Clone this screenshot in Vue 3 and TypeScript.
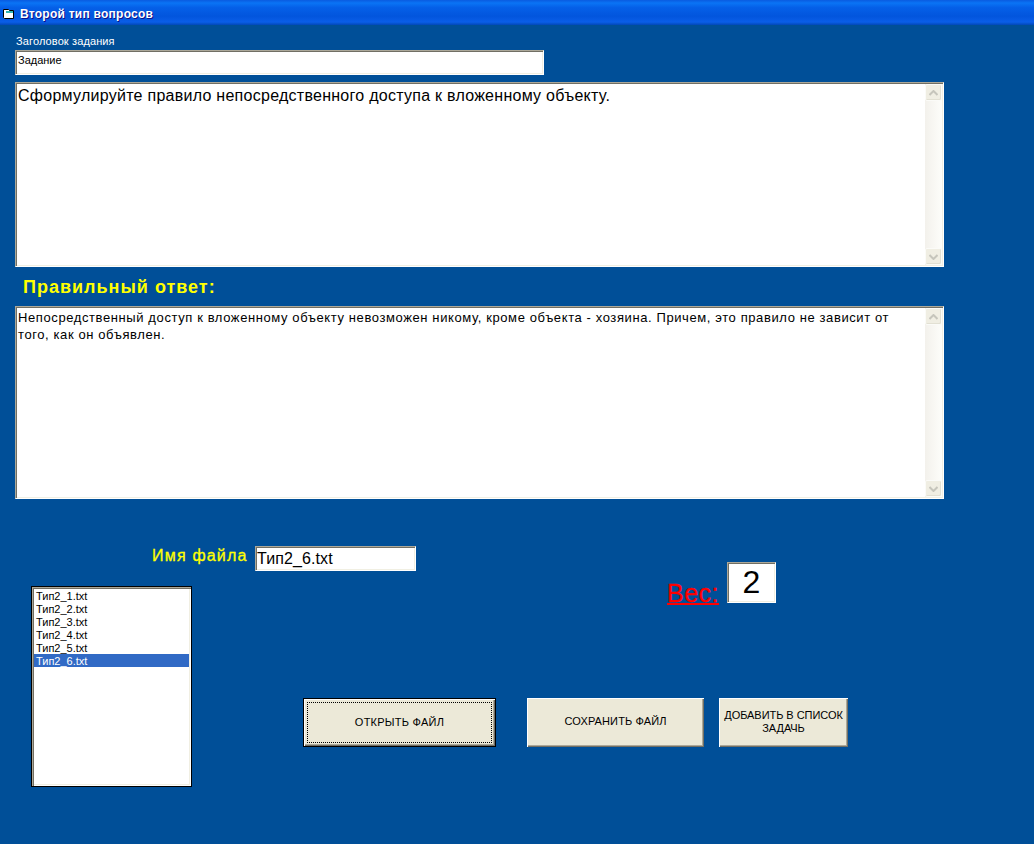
<script setup lang="ts">
const files: string[] = ['Тип2_1.txt', 'Тип2_2.txt', 'Тип2_3.txt', 'Тип2_4.txt', 'Тип2_5.txt', 'Тип2_6.txt']
const selected = 'Тип2_6.txt'
</script>

<template>
  <div class="form">
    <header class="titlebar">
      <svg class="app-icon" width="12" height="10" viewBox="0 0 12 10">
        <path d="M0.5 0.5h5l1 1h4v8h-9l-1-1z" fill="#fff" stroke="#000" stroke-width="1" />
        <rect x="3" y="2" width="7" height="2" fill="#2fb5b5" />
      </svg>
      <span class="title">Второй тип вопросов</span>
    </header>

    <main class="content">
      <label class="caption">Заголовок задания</label>
      <div class="field title-field">Задание</div>

      <div class="memo question">
        <div class="memo-text">Сформулируйте правило непосредственного доступа к вложенному объекту.</div>
        <div class="scrollbar">
          <div class="sb-btn">
            <svg width="9" height="6" viewBox="0 0 9 6"><path d="M0.5 5L4.5 1L8.5 5" fill="none" stroke="#c6c5bc" stroke-width="2" /></svg>
          </div>
          <div class="sb-btn">
            <svg width="9" height="6" viewBox="0 0 9 6"><path d="M0.5 1L4.5 5L8.5 1" fill="none" stroke="#c6c5bc" stroke-width="2" /></svg>
          </div>
        </div>
      </div>

      <h2 class="answer-heading">Правильный ответ:</h2>

      <div class="memo answer">
        <div class="memo-text small">Непосредственный доступ к вложенному объекту невозможен никому, кроме объекта - хозяина. Причем, это правило не зависит от того, как он объявлен.</div>
        <div class="scrollbar">
          <div class="sb-btn">
            <svg width="9" height="6" viewBox="0 0 9 6"><path d="M0.5 5L4.5 1L8.5 5" fill="none" stroke="#c6c5bc" stroke-width="2" /></svg>
          </div>
          <div class="sb-btn">
            <svg width="9" height="6" viewBox="0 0 9 6"><path d="M0.5 1L4.5 5L8.5 1" fill="none" stroke="#c6c5bc" stroke-width="2" /></svg>
          </div>
        </div>
      </div>

      <section class="lower">
        <div class="file-row">
          <span class="file-label">Имя файла</span>
          <div class="field file-field">Тип2_6.txt</div>
        </div>

        <div class="weight">
          <span class="weight-label">Вес:</span>
          <div class="field weight-field">2</div>
        </div>

        <ul class="listbox">
          <li v-for="f in files" :key="f" :class="{ sel: f === selected }">{{ f }}</li>
        </ul>

        <button class="btn default open" type="button"><span class="focus">ОТКРЫТЬ ФАЙЛ</span></button>
        <button class="btn save" type="button">СОХРАНИТЬ ФАЙЛ</button>
        <button class="btn add" type="button">ДОБАВИТЬ В СПИСОК ЗАДАЧЬ</button>
      </section>
    </main>
  </div>
</template>

<style>
html, body {
  margin: 0;
  background: #004f98;
}
</style>

<style scoped>
.form {
  width: 1034px;
  height: 844px;
  overflow: hidden;
  background: #004f98;
  font-family: "Liberation Sans", Arial, sans-serif;
  color: #000;
}
.titlebar {
  height: 25px;
  box-sizing: border-box;
  display: flex;
  align-items: center;
  padding: 3px 0 0 3px;
  gap: 5px;
  background: linear-gradient(180deg, #0a5be0 0%, #0a74f5 12%, #0560e8 30%, #0255dd 65%, #0a5ee8 88%, #0148b8 100%);
}
.app-icon { flex: none; }
.title {
  color: #fff;
  font-size: 12px;
  font-weight: bold;
  letter-spacing: 0.25px;
  text-shadow: 1px 1px 0 #0f1089;
}
.content { padding: 0 0 0 15px; }
.caption {
  display: block;
  height: 25px;
  padding: 10px 0 0 1px;
  box-sizing: border-box;
  color: #fff;
  font-size: 11px;
  line-height: 13px;
  letter-spacing: 0.12px;
}
.field {
  box-sizing: border-box;
  background: #fff;
  border: 1px solid;
  border-color: #aca899 #fff #fff #aca899;
  box-shadow: inset 1px 1px 0 #716f64, inset -1px -1px 0 #f1efe2;
  white-space: nowrap;
}
.title-field {
  width: 529px;
  height: 25px;
  padding: 2px 0 0 2px;
  font-size: 11px;
  line-height: 15px;
}
.memo {
  box-sizing: border-box;
  width: 929px;
  display: flex;
  background: #fff;
  border: 1px solid;
  border-color: #aca899 #fff #fff #aca899;
  box-shadow: inset 1px 1px 0 #716f64, inset -1px -1px 0 #f1efe2;
}
.question { height: 185px; margin-top: 7px; }
.answer { height: 193px; }
.memo-text {
  flex: 1;
  min-width: 0;
  padding: 3px 30px 0 2px;
  font-size: 16px;
  line-height: 19px;
  letter-spacing: 0.265px;
}
.memo-text.small {
  padding-top: 2px;
  font-size: 13px;
  line-height: 17px;
  letter-spacing: 0.6px;
}
.scrollbar {
  flex: none;
  width: 17px;
  margin: 1px 1px 1px 0;
  display: flex;
  flex-direction: column;
  justify-content: space-between;
  background: linear-gradient(90deg, #f3f1ec 0%, #fdfdfa 100%);
}
.sb-btn {
  box-sizing: border-box;
  height: 17px;
  display: flex;
  align-items: center;
  justify-content: center;
  background: #f0eee3;
  border: 1px solid #fbfbf8;
  border-radius: 2px;
  box-shadow: inset -1px -1px 0 #e2e0d3;
}
.answer-heading {
  margin: 0;
  height: 39px;
  box-sizing: border-box;
  padding: 10px 0 0 8px;
  color: #ff0;
  font-size: 18px;
  line-height: 21px;
  font-weight: bold;
  letter-spacing: 1px;
}
.lower {
  margin: 47px 0 0 17px;
  display: grid;
  grid-template-columns: 159px 112px 193px 31px 177px 15px 129px;
  grid-template-rows: 41px 16px 95px 49px 40px;
}
.file-row {
  grid-column: 1 / 4;
  grid-row: 1;
  display: flex;
  align-items: flex-start;
  padding-left: 120px;
}
.file-label {
  width: 103px;
  padding-top: 1px;
  color: #ff0;
  font-size: 16px;
  line-height: 17px;
  letter-spacing: 1.2px;
  white-space: nowrap;
  -webkit-text-stroke: 0.3px #ff0;
}
.file-field {
  width: 161px;
  height: 25px;
  padding: 3px 0 0 1px;
  font-size: 16px;
  line-height: 18px;
  letter-spacing: 0.1px;
}
.weight {
  grid-column: 5 / -1;
  grid-row: 1 / 3;
  display: flex;
  align-items: flex-start;
  padding: 16px 0 0 140px;
}
.weight-label {
  width: 60px;
  flex: none;
  margin-top: 17px;
  color: #f00;
  font-size: 25px;
  line-height: 28px;
  letter-spacing: 0.5px;
  text-decoration: underline;
  text-decoration-thickness: 2px;
  -webkit-text-stroke: 0.3px #f00;
}
.weight-field {
  width: 49px;
  height: 41px;
  flex: none;
  text-align: center;
  font-size: 32px;
  line-height: 38px;
}
.listbox {
  grid-column: 1;
  grid-row: 2 / 6;
  margin: -1px 0 0 -1px;
  height: 201px;
  width: 161px;
  list-style: none;
  box-sizing: border-box;
  padding: 2px;
  background: #fff;
  border: 1px solid #000;
  box-shadow: inset 1px 1px 0 #aca899, inset 2px 2px 0 #716f64, inset -1px -1px 0 #fff, inset -2px -2px 0 #f1efe2;
  font-size: 11px;
}
.listbox li {
  box-sizing: border-box;
  height: 13px;
  line-height: 13px;
  padding: 1px 0 0 2px;
  overflow: hidden;
}
.listbox li.sel {
  background: #316ac5;
  color: #fff;
}
.btn {
  grid-row: 4;
  box-sizing: border-box;
  margin: 0;
  padding: 0 0 2px;
  height: 49px;
  background: #ece9d8;
  border: 0;
  box-shadow: inset 1px 1px 0 #fff, inset -1px -1px 0 #716f64, inset -2px -2px 0 #aca899;
  font-family: "Liberation Sans", Arial, sans-serif;
  font-size: 11px;
  line-height: 13px;
  color: #000;
}
.open { grid-column: 3; letter-spacing: 0.25px; }
.save { grid-column: 5; letter-spacing: 0.12px; }
.add { grid-column: 7; padding: 0 5px 2px; letter-spacing: -0.05px; }
.btn.default {
  border: 1px solid #000;
  padding: 3px;
}
.focus {
  box-sizing: border-box;
  display: flex;
  align-items: center;
  justify-content: center;
  width: 100%;
  height: 100%;
  padding-bottom: 1px;
  border: 1px dotted #000;
}
</style>
